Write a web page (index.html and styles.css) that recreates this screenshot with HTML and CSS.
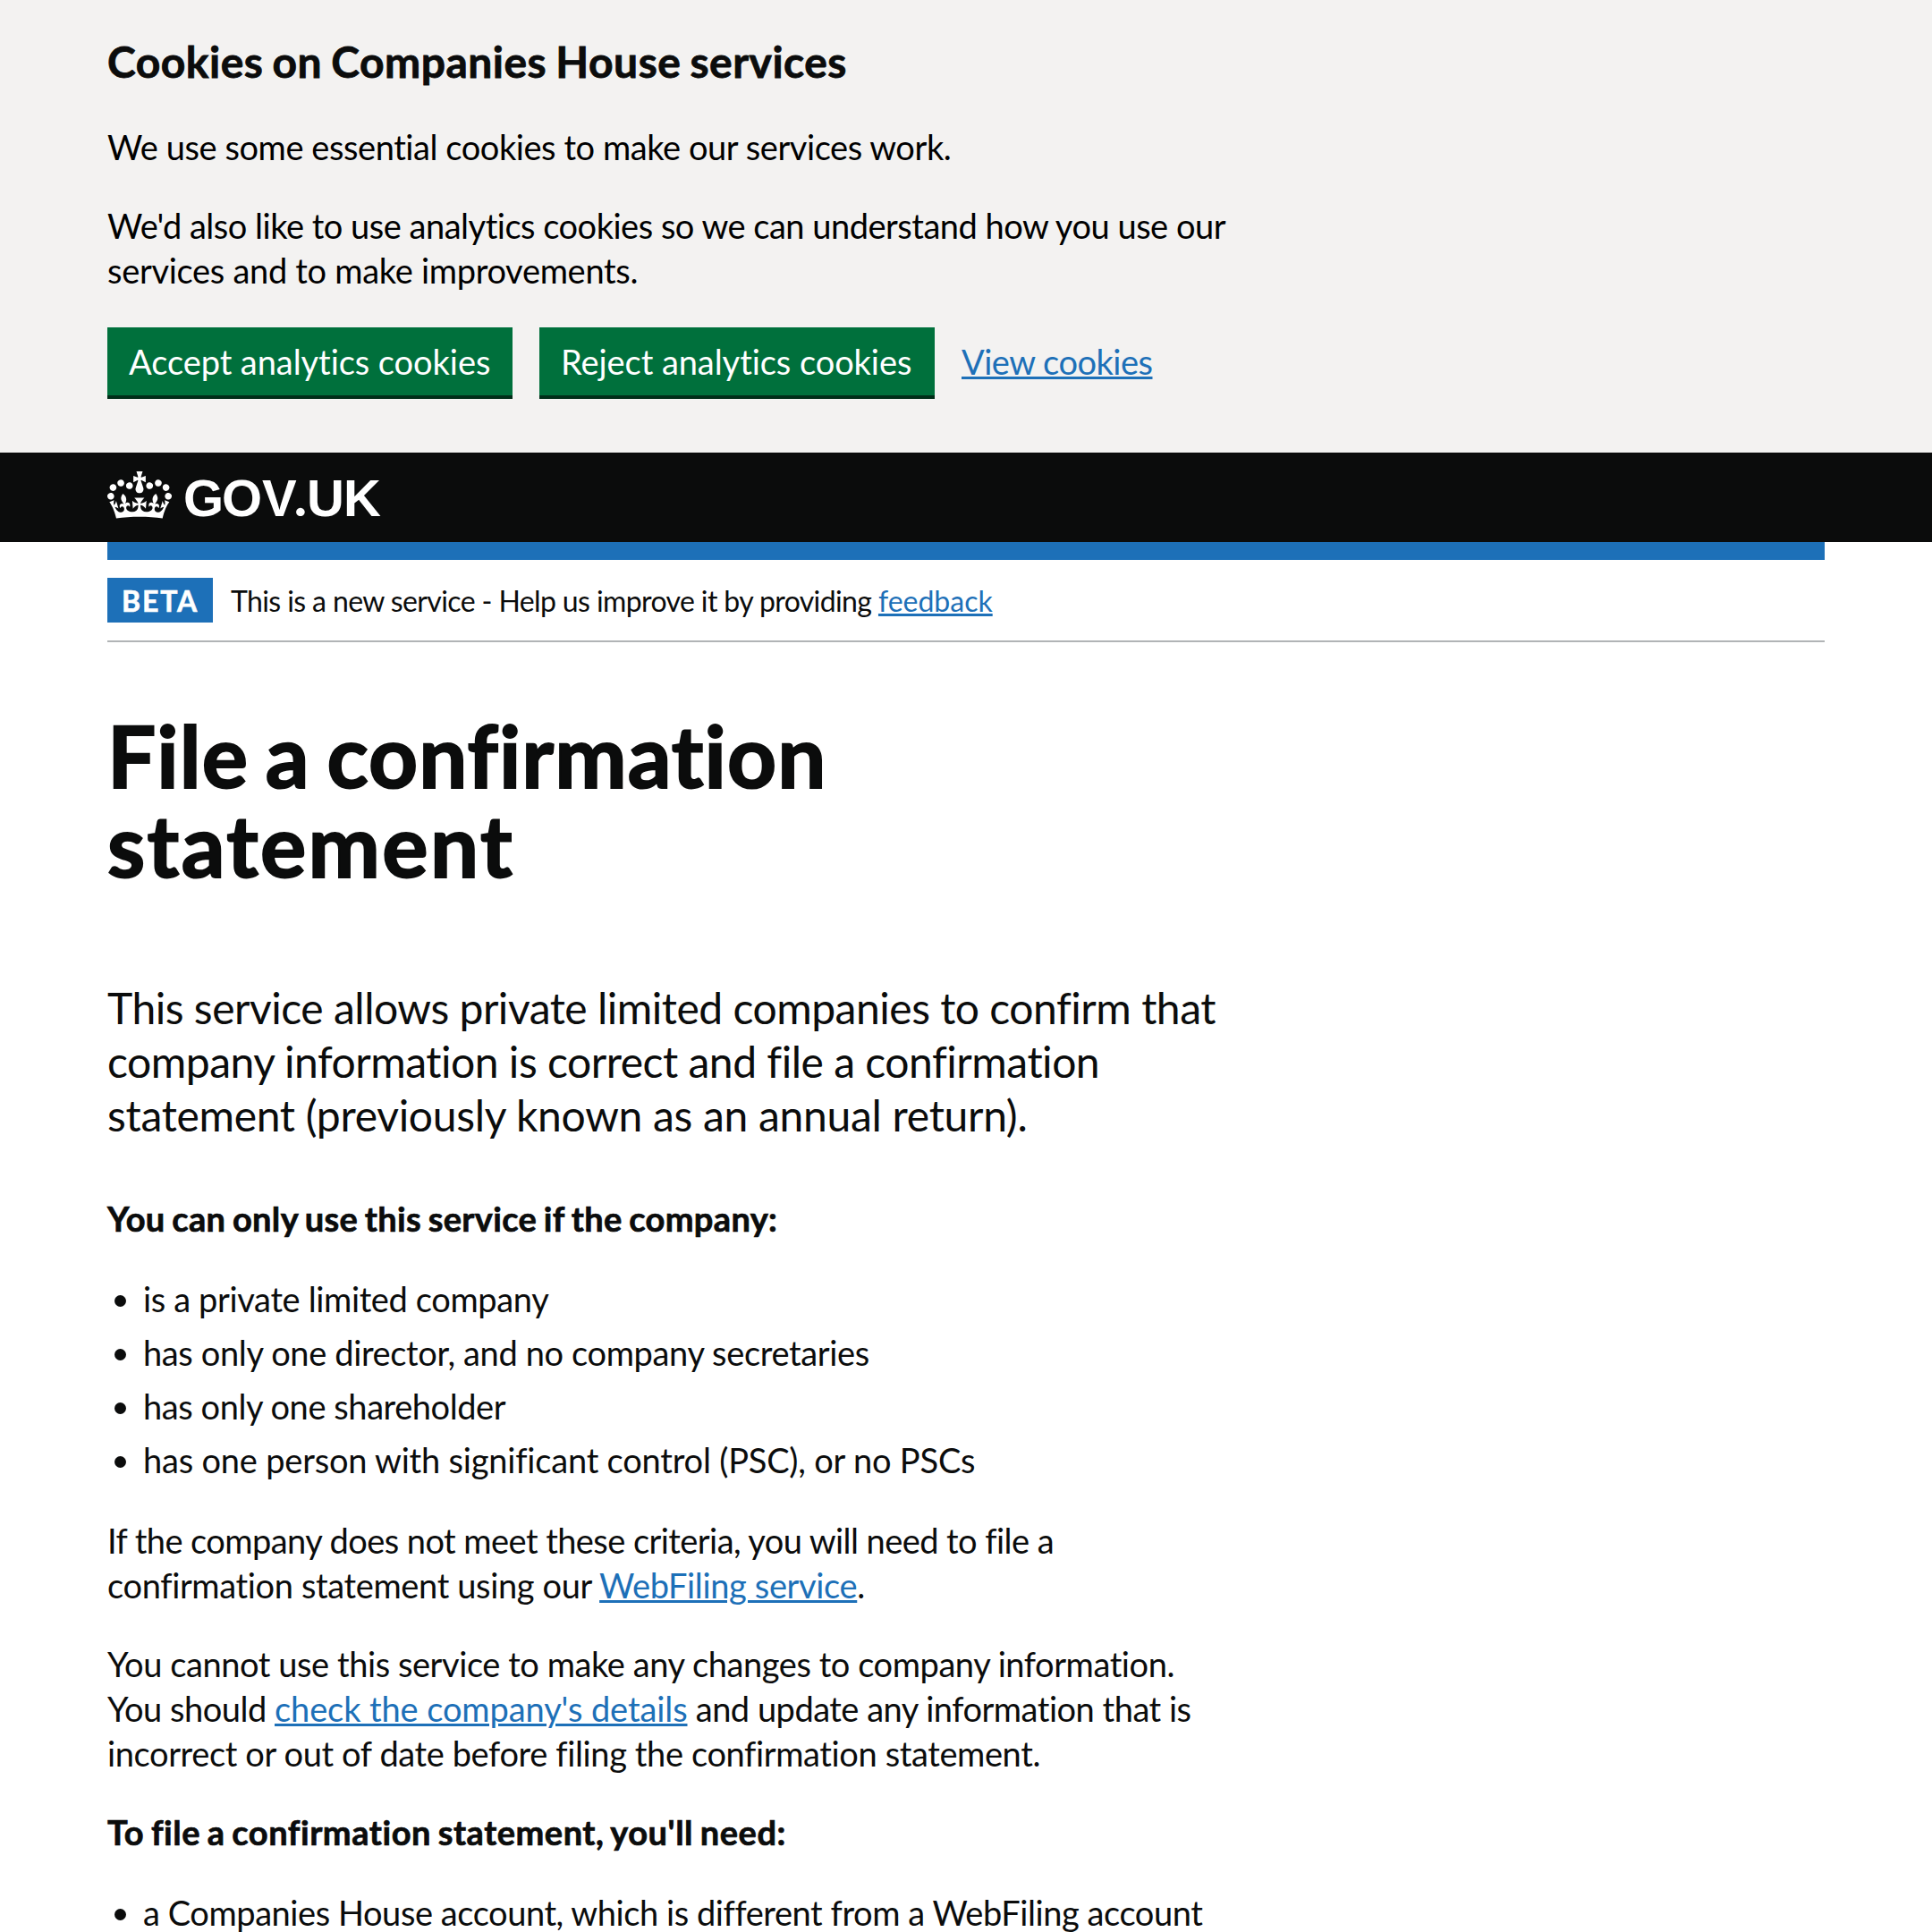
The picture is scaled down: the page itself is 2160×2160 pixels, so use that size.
FILE: index.html
```html
<!DOCTYPE html>
<html lang="en">
<head>
<meta charset="utf-8">
<title>File a confirmation statement</title>
<link rel="stylesheet" href="styles.css">
</head>
<body>
<section class="cookie-banner">
  <h2 class="cookie-title">Cookies on Companies House services</h2>
  <p class="body-text track-4">We use some essential cookies to make our services work.</p>
  <p class="body-text"><span class="track-5">We'd also like to use analytics cookies so we can understand how you use our</span><br><span class="track-3">services and to make improvements.</span></p>
  <div class="button-group">
    <button class="button button-accept">Accept analytics cookies</button>
    <button class="button button-reject">Reject analytics cookies</button>
    <a class="link track-5" href="#">View cookies</a>
  </div>
</section>
<header class="header">
  <svg class="crown" viewBox="0 0 132 97" width="72" height="53" aria-hidden="true"><path fill="currentColor" fill-rule="evenodd" d="M25 30.2c3.5 1.5 7.7-.2 9.1-3.7 1.5-3.6-.2-7.8-3.9-9.2-3.6-1.4-7.6.3-9.1 3.9-1.4 3.5.3 7.5 3.9 9zM9 39.5c3.6 1.5 7.8-.2 9.2-3.7 1.5-3.6-.2-7.8-3.9-9.1-3.6-1.5-7.6.2-9.1 3.8-1.4 3.5.3 7.5 3.8 9zM4.4 57.2c3.5 1.5 7.7-.2 9.1-3.8 1.5-3.6-.2-7.7-3.9-9.1-3.5-1.5-7.6.3-9.1 3.8-1.4 3.5.3 7.6 3.9 9.1zm38.3-21.4c3.5 1.5 7.7-.2 9.1-3.8 1.5-3.6-.2-7.7-3.9-9.1-3.6-1.5-7.6.3-9.1 3.8-1.3 3.6.4 7.7 3.9 9.1zm64.4-5.6c-3.6 1.5-7.8-.2-9.1-3.7-1.5-3.6.2-7.8 3.8-9.2 3.6-1.4 7.7.3 9.2 3.9 1.3 3.5-.4 7.5-3.9 9zm15.9 9.3c-3.6 1.5-7.7-.2-9.1-3.7-1.5-3.6.2-7.8 3.7-9.1 3.6-1.5 7.7.2 9.2 3.8 1.5 3.5-.3 7.5-3.8 9zm4.7 17.7c-3.6 1.5-7.8-.2-9.2-3.8-1.5-3.6.2-7.7 3.9-9.1 3.6-1.5 7.7.3 9.2 3.8 1.3 3.5-.4 7.6-3.9 9.1zM89.3 35.8c-3.6 1.5-7.8-.2-9.2-3.8-1.4-3.6.2-7.7 3.9-9.1 3.6-1.5 7.7.3 9.2 3.8 1.4 3.6-.3 7.7-3.9 9.1zM69.7 17.7l8.9 4.7V9.3l-8.9 2.8c-.2-.3-.5-.6-.9-.9L72.4 0H59.6l3.5 11.2c-.3.3-.6.5-.9.9l-8.8-2.8v13.1l8.8-4.7c.3.3.6.7.9.9l-5 15.4v.1c-.2.8-.4 1.6-.4 2.4 0 4.1 3.1 7.5 7 8.1h.2c.3 0 .7.1 1 .1.4 0 .7 0 1-.1h.2c4-.6 7.1-4.1 7.1-8.1 0-.8-.1-1.7-.4-2.4V34l-5.1-15.4c.4-.2.7-.6 1-.9zM66 92.8c16.9 0 32.8 1.1 47.1 3.2 4-16.9 8.9-26.7 14-33.5l-9.6-3.4c1 4.9 1.1 7.2 0 10.2-1.5-1.4-3-4.3-4.2-8.7L108.6 76c2.8-2 5-3.2 7.5-3.3-4.4 9.4-10 11.9-13.6 11.2-4.3-.8-6.3-4.6-5.6-7.9 1-4.7 5.7-5.9 8-.5 4.3-8.7-3-11.4-7.6-8.8 7.1-7.2 7.9-13.5 2.1-21.1-8 6.1-8.1 12.3-4.5 20.8-4.7-5.4-12.1-2.5-9.5 6.2 3.4-5.2 7.9-2 7.2 3.1-.6 4.3-6.4 7.8-13.5 7.2-10.3-.9-10.9-8-11.2-13.8 2.5-.5 7.1 1.8 11 7.3L80.2 60c-4.1 4.4-8 5.3-12.3 5.4 1.4-4.4 8-11.6 8-11.6H55.5s6.4 7.2 7.9 11.6c-4.2-.1-8-1-12.3-5.4l1.4 16.4c3.9-5.5 8.5-7.7 10.9-7.3-.3 5.8-.9 12.8-11.1 13.8-7.2.6-12.9-2.9-13.5-7.2-.7-5 3.8-8.3 7.1-3.1 2.7-8.7-4.6-11.6-9.4-6.2 3.7-8.5 3.6-14.7-4.6-20.8-5.8 7.6-5 13.9 2.2 21.1-4.7-2.6-11.9.1-7.7 8.8 2.3-5.5 7.1-4.2 8.1.5.7 3.3-1.3 7.1-5.7 7.9-3.5.7-9-1.8-13.5-11.2 2.5.1 4.7 1.3 7.5 3.3l-4.7-15.4c-1.2 4.4-2.7 7.2-4.3 8.7-1.1-3-.9-5.3 0-10.2l-9.5 3.4c5 6.9 9.9 16.7 14 33.5 14.8-2.1 30.8-3.2 47.7-3.2z"/></svg>
  <svg class="wordmark" viewBox="0 0 232 72" width="232" height="72"><text x="5 48 93" y="50">GOV<tspan class="wordmark-dot" x="129">.</tspan><tspan x="143 184">UK</tspan></text></svg>
</header>
<div class="container">
  <div class="phase-banner">
    <strong class="tag">BETA</strong>
    <span class="phase-text">This is a new service - Help us improve it by providing <a class="link track-0" href="#">feedback</a></span>
  </div>
  <main class="main">
    <h1 class="title">File a confirmation<br><span class="title-end">statement</span></h1>
    <p class="lead"><span class="track-5">This service allows private limited companies to confirm that</span><br><span class="track-5">company information is correct and file a confirmation</span><br><span class="track-3">statement (previously known as an annual return).</span></p>
    <p class="body-text strong">You can only use this service if the company:</p>
    <ul class="list">
      <li class="track-35">is a private limited company</li>
      <li class="track-35">has only one director, and no company secretaries</li>
      <li class="track-4">has only one shareholder</li>
      <li class="track-2">has one person with significant control (PSC), or no PSCs</li>
    </ul>
    <p class="body-text"><span class="track-6">If the company does not meet these criteria, you will need to file a</span><br><span class="track-35">confirmation statement using our <a class="link" href="#">WebFiling service</a>.</span></p>
    <p class="body-text"><span class="track-4">You cannot use this service to make any changes to company information.</span><br><span class="track-5">You should <a class="link track-1" href="#">check the company's details</a> and update any information that is</span><br><span class="track-38">incorrect or out of date before filing the confirmation statement.</span></p>
    <p class="body-text strong strong-wide">To file a confirmation statement, you'll need:</p>
    <ul class="list">
      <li class="track-4">a Companies House account, which is different from a WebFiling account</li>
    </ul>
  </main>
</div>
</body>
</html>
```
FILE: styles.css
```css
* { box-sizing: border-box; }
body { margin: 0; width: 2160px; height: 2160px; overflow: hidden; background: #fff; color: #0b0c0c; font-family: Lato, "Noto Sans", sans-serif; font-size: 38px; line-height: 50px; white-space: nowrap; font-variant-ligatures: none; }
h1, h2, p, ul { margin: 0; padding: 0; }

/* Line tracking */
.track-0 { letter-spacing: 0; }
.track-1 { letter-spacing: -0.1px; }
.track-2 { letter-spacing: -0.2px; }
.track-3 { letter-spacing: -0.3px; }
.track-35 { letter-spacing: -0.36px; }
.track-38 { letter-spacing: -0.38px; }
.track-4 { letter-spacing: -0.43px; }
.track-5 { letter-spacing: -0.49px; }
.track-6 { letter-spacing: -0.56px; }

.cookie-banner { height: 506px; padding: 39px 120px 0; background: #f3f2f1; color: #000; }
.cookie-title { margin-bottom: 40px; font-size: 48px; line-height: 60px; letter-spacing: 0.48px; word-spacing: -2px; color: #0b0c0c; -webkit-text-stroke: 0.8px currentColor; }
.body-text { margin-bottom: 38px; }
.button-group { display: flex; align-items: flex-start; margin-top: 39px; }
.button { height: 76px; margin: 0 30px 0 0; padding: 13px 0 13px 24px; border: 0; background: #00703c; box-shadow: 0 4px 0 #002d18; color: #fff; font: inherit; font-variant-ligatures: none; text-align: left; }
.button-accept { width: 453px; letter-spacing: -0.06px; }
.button-reject { width: 442px; letter-spacing: -0.06px; }
.button-group .link { margin-top: 13px; }
.link { color: #1d70b8; text-decoration: underline; text-decoration-thickness: 3px; text-underline-offset: 2px; }

.header { display: flex; height: 100px; padding: 21px 120px 0; background: #0b0c0c; color: #fff; }
.wordmark { margin-left: 8px; overflow: visible; fill: #fff; font: bold 58px "Liberation Sans", sans-serif; }
.wordmark-dot { font-family: Lato, sans-serif; font-weight: 900; }

.container { margin: 0 120px; border-top: 20px solid #1d70b8; }
.phase-banner { display: flex; align-items: center; gap: 20px; height: 92px; padding: 20px 0; border-bottom: 2px solid #b1b4b6; font-size: 32px; line-height: 40px; }
.tag { width: 118px; padding: 6px 0 4px 16px; background: #1d70b8; color: #fff; letter-spacing: 1.9px; -webkit-text-stroke: 0.6px currentColor; }
.phase-text { padding-top: 1px; letter-spacing: -0.61px; }

.main { padding-top: 76px; }
.title { margin-bottom: 102px; font-size: 96px; line-height: 100px; letter-spacing: 1.05px; word-spacing: -5.5px; -webkit-text-stroke: 2px currentColor; }
.title-end { letter-spacing: 2.4px; }
.lead { margin-bottom: 60px; padding-top: 1px; font-size: 48px; line-height: 60px; }
.strong { margin-bottom: 40px; font-weight: 700; letter-spacing: 0.35px; word-spacing: -2px; -webkit-text-stroke: 0.7px currentColor; }
.strong-wide { letter-spacing: 0.53px; }
.list { display: grid; gap: 10px; margin-bottom: 40px; padding-left: 8px; list-style: none; }
.list li { display: flex; align-items: center; gap: 19px; }
.list li::before { content: ""; width: 13px; height: 13px; margin-top: 4px; border-radius: 50%; background: #0b0c0c; }
```
